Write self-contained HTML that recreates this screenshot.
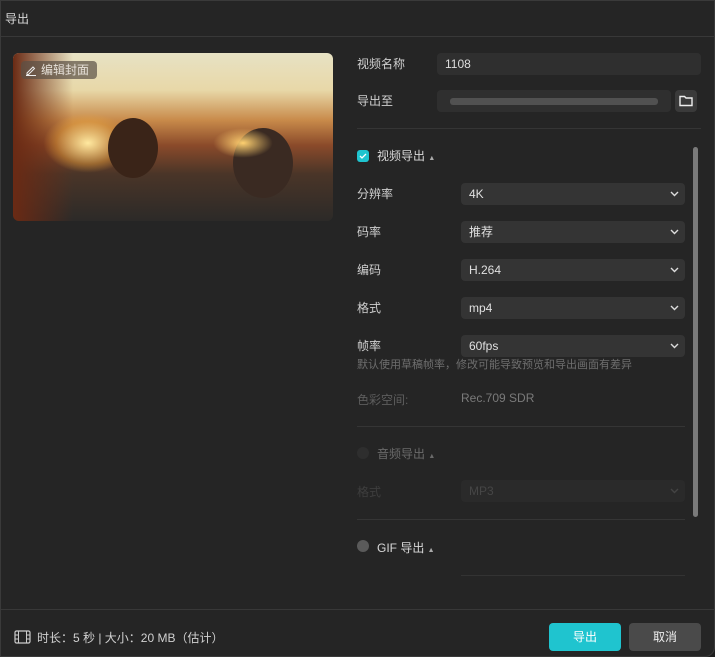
<!DOCTYPE html>
<html><head><meta charset="utf-8"><style>
*{margin:0;padding:0;box-sizing:border-box}
body{width:715px;height:657px;background:#1e1e1e;font-family:"Liberation Sans","Noto Sans CJK SC",sans-serif;color:#d6d6d6;font-size:12px;position:relative;overflow:hidden}
.win{position:absolute;left:0;top:0;width:715px;height:657px;background:#252525;border:1px solid #3a3a3a;border-radius:0 0 10px 0}
.a{position:absolute}
.lbl{position:absolute;left:356px;font-size:12px;color:#cfcfcf}
.dd{position:absolute;left:460px;width:224px;height:22px;background:#343434;border-radius:4px;font-size:12px;color:#e0e0e0;padding-left:8px;line-height:22px}
.dd svg{position:absolute;right:6px;top:8px}
.sep{position:absolute;height:1px;background:#353535}
</style></head><body><div class="win">
<div class="a" style="left:4px;top:9px;font-size:12px;color:#d8d8d8">导出</div>
<div class="sep" style="left:0;top:35px;width:715px;background:#383838"></div>

<div class="a" style="left:12px;top:52px;width:320px;height:168px;border-radius:6px;overflow:hidden;background:linear-gradient(180deg,#e7e2c4 0%,#e8d8a8 22%,#c88a4a 40%,#8a4a2a 55%,#4a3528 72%,#2c2a28 100%)">
 <div class="a" style="left:0;top:0;width:60px;height:168px;background:linear-gradient(90deg,#6a2a14,rgba(120,50,20,0))"></div>
 <div class="a" style="left:30px;top:60px;width:90px;height:60px;border-radius:50%;background:radial-gradient(#ffe9a0,rgba(240,170,60,0.4) 50%,rgba(0,0,0,0) 70%)"></div>
 <div class="a" style="left:95px;top:65px;width:50px;height:60px;border-radius:50%;background:#3a2418"></div>
 <div class="a" style="left:220px;top:75px;width:60px;height:70px;border-radius:50%;background:#3a2a22"></div>
 <div class="a" style="left:200px;top:75px;width:60px;height:30px;border-radius:50%;background:radial-gradient(#ffd070,rgba(0,0,0,0) 70%)"></div>
 <div class="a" style="left:8px;top:8px;width:76px;height:18px;background:rgba(90,80,70,.7);border-radius:4px;font-size:12px;color:#e6e0d8;line-height:18px;padding-left:20px">编辑封面</div>
 <svg class="a" style="left:12px;top:11px" width="12" height="12" viewBox="0 0 12 12"><path d="M2 9L8 3l1.5 1.5-6 6H2z M1 11.5h10" stroke="#eee" fill="none" stroke-width="1"/></svg>
</div>

<div class="lbl" style="top:54px">视频名称</div>
<div class="a" style="left:436px;top:52px;width:264px;height:22px;background:#2f2f2f;border-radius:4px;padding-left:8px;line-height:22px;color:#ddd">1108</div>
<div class="lbl" style="top:91px">导出至</div>
<div class="a" style="left:436px;top:89px;width:234px;height:22px;background:#2f2f2f;border-radius:4px"></div>
<div class="a" style="left:449px;top:97px;width:208px;height:7px;background:#5a5a5a;border-radius:3px;opacity:.8"></div>
<div class="a" style="left:674px;top:89px;width:22px;height:22px;background:#3a3a3a;border-radius:4px"></div>
<svg class="a" style="left:678px;top:94px" width="14" height="12" viewBox="0 0 14 12"><path d="M1 1.5h4.5l1.5 1.5h6v7.5H1z" fill="none" stroke="#eee" stroke-width="1.4"/></svg>
<div class="sep" style="left:356px;top:127px;width:344px"></div>

<div class="a" style="left:356px;top:149px;width:12px;height:12px;background:#1fc4cf;border-radius:3px"></div>
<svg class="a" style="left:358px;top:151px" width="8" height="8" viewBox="0 0 8 8"><path d="M1 4l2 2 4-4" stroke="#fff" fill="none" stroke-width="1.3"/></svg>
<div class="a" style="left:376px;top:146px;color:#d8d8d8">视频导出 <span style="font-size:7px;color:#aaa">▲</span></div>

<div class="a" style="left:692px;top:146px;width:5px;height:370px;background:#7a7a7a;border-radius:3px"></div>

<div class="lbl" style="top:184px">分辨率</div>
<div class="dd" style="top:182px">4K<svg width="9" height="6"><path d="M1 1l3.5 3.5L8 1" stroke="#ddd" fill="none" stroke-width="1.4"/></svg></div>
<div class="lbl" style="top:222px">码率</div>
<div class="dd" style="top:220px">推荐<svg width="9" height="6"><path d="M1 1l3.5 3.5L8 1" stroke="#ddd" fill="none" stroke-width="1.4"/></svg></div>
<div class="lbl" style="top:260px">编码</div>
<div class="dd" style="top:258px">H.264<svg width="9" height="6"><path d="M1 1l3.5 3.5L8 1" stroke="#ddd" fill="none" stroke-width="1.4"/></svg></div>
<div class="lbl" style="top:298px">格式</div>
<div class="dd" style="top:296px">mp4<svg width="9" height="6"><path d="M1 1l3.5 3.5L8 1" stroke="#ddd" fill="none" stroke-width="1.4"/></svg></div>
<div class="lbl" style="top:336px">帧率</div>
<div class="dd" style="top:334px">60fps<svg width="9" height="6"><path d="M1 1l3.5 3.5L8 1" stroke="#ddd" fill="none" stroke-width="1.4"/></svg></div>
<div class="lbl" style="top:355px;font-size:11px;color:#6e6e6e">默认使用草稿帧率，修改可能导致预览和导出画面有差异</div>
<div class="lbl" style="top:390px;color:#5e5e5e">色彩空间:</div>
<div class="a" style="left:460px;top:390px;color:#7a7a7a">Rec.709 SDR</div>
<div class="sep" style="left:356px;top:425px;width:328px"></div>

<div class="a" style="left:356px;top:446px;width:12px;height:12px;background:#2e2e2e;border-radius:6px"></div>
<div class="a" style="left:376px;top:444px;color:#6a6a6a">音频导出 <span style="font-size:7px">▲</span></div>
<div class="lbl" style="top:482px;color:#3e3e3e">格式</div>
<div class="dd" style="top:479px;background:#2a2a2a;color:#464646">MP3<svg width="9" height="6"><path d="M1 1l3.5 3.5L8 1" stroke="#444" fill="none" stroke-width="1.4"/></svg></div>
<div class="sep" style="left:356px;top:518px;width:328px"></div>

<div class="a" style="left:356px;top:539px;width:12px;height:12px;background:#5a5a5a;border-radius:6px"></div>
<div class="a" style="left:376px;top:538px;color:#d8d8d8">GIF 导出 <span style="font-size:7px;color:#aaa">▲</span></div>
<div class="sep" style="left:460px;top:574px;width:224px;background:#333"></div>

<div class="sep" style="left:0;top:608px;width:715px;background:#383838"></div>
<svg class="a" style="left:13px;top:629px" width="17" height="14" viewBox="0 0 17 14"><rect x="1" y="1" width="15" height="12" rx="1.5" fill="none" stroke="#ccc" stroke-width="1.2"/><path d="M4.5 1v12M12.5 1v12M1 5h3.5M1 9h3.5M12.5 5H16M12.5 9H16" stroke="#ccc" stroke-width="1"/></svg>
<div class="a" style="left:36px;top:628px;font-size:12px;color:#d0d0d0">时长：5 秒 | 大小：20 MB（估计）</div>
<div class="a" style="left:548px;top:622px;width:72px;height:28px;background:#1fc4cf;border-radius:4px;text-align:center;line-height:28px;color:#fff">导出</div>
<div class="a" style="left:628px;top:622px;width:72px;height:28px;background:#4a4a4a;border-radius:4px;text-align:center;line-height:28px;color:#eee">取消</div>
</div></body></html>
